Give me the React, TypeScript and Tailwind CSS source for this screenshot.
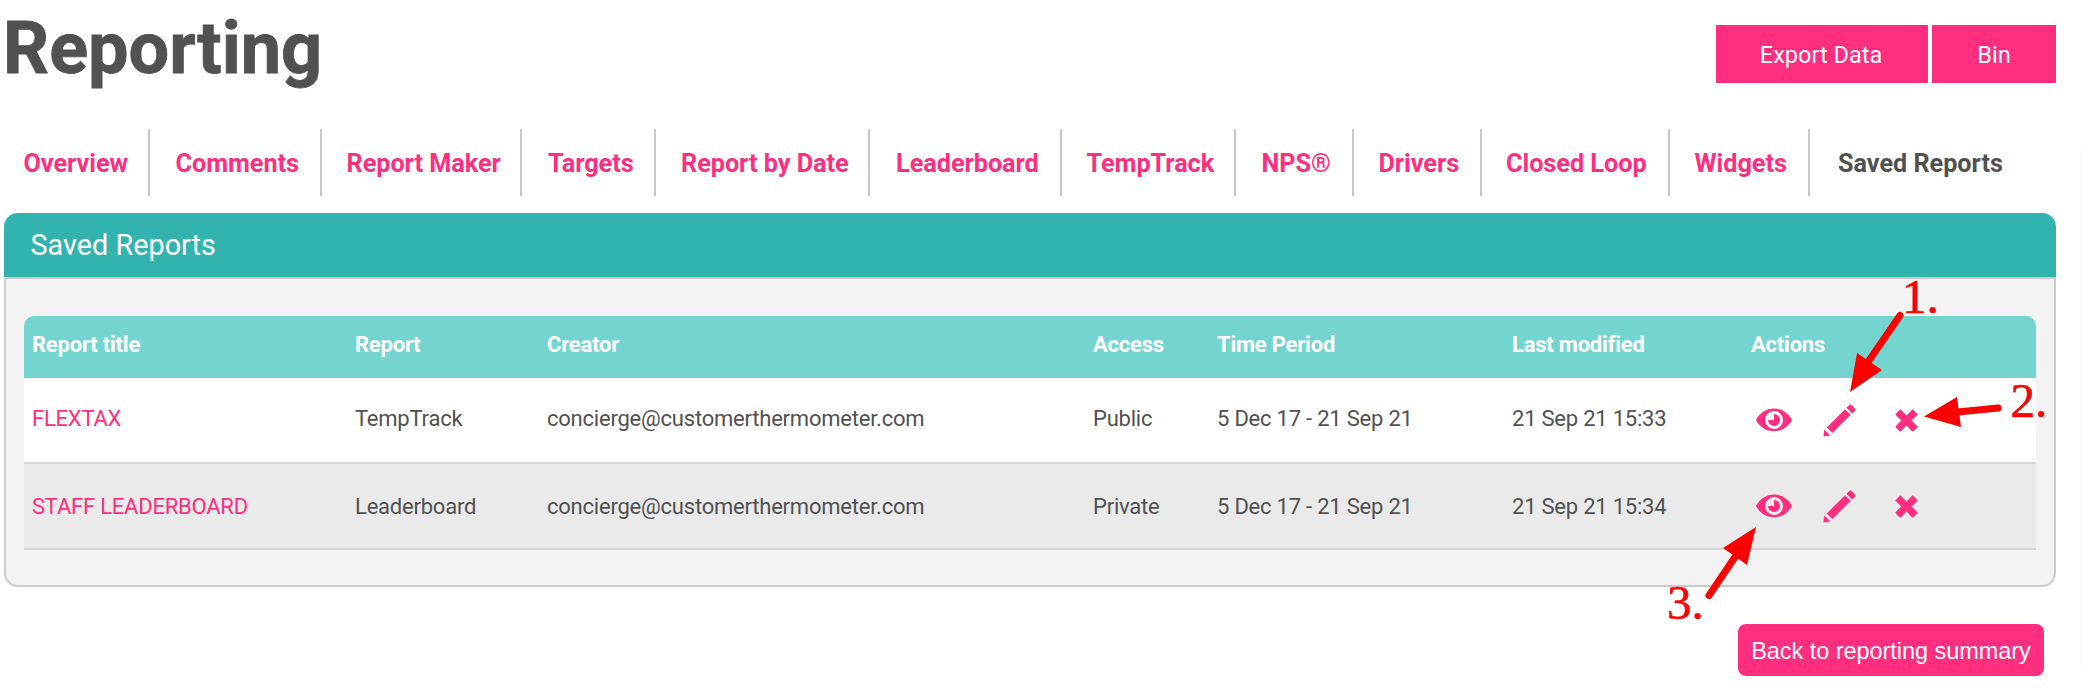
const tabs = [
  { label: "Overview", cls: "w-[146px] pl-[19.500px]" },
  { label: "Comments", cls: "w-[172px] pl-[25.500px]" },
  { label: "Report Maker", cls: "w-[200px] pl-[24.500px]" },
  { label: "Targets", cls: "w-[134px] pl-[26px]" },
  { label: "Report by Date", cls: "w-[214px] pl-[25px]" },
  { label: "Leaderboard", cls: "w-[192px] pl-[26px]" },
  { label: "TempTrack", cls: "w-[174px] pl-[24.500px]" },
  { label: "NPS®", cls: "w-[118px] pl-[25.500px]" },
  { label: "Drivers", cls: "w-[128px] pl-[24.500px]" },
  { label: "Closed Loop", cls: "w-[188px] pl-[24px]" },
  { label: "Widgets", cls: "w-[140px] pl-[24.500px]" },
];

const columns = ["Report title", "Report", "Creator", "Access", "Time Period", "Last modified", "Actions"];

const rows = [
  ["FLEXTAX", "TempTrack", "concierge@customerthermometer.com", "Public", "5 Dec 17 - 21 Sep 21", "21 Sep 21 15:33"],
  ["STAFF LEADERBOARD", "Leaderboard", "concierge@customerthermometer.com", "Private", "5 Dec 17 - 21 Sep 21", "21 Sep 21 15:34"],
];

const grid = "grid grid-cols-[323px_192px_546px_124px_295px_239px_1fr] pl-[8.500px] items-center whitespace-nowrap";

function EyeIcon({ hole }: { hole: string }) {
  return (
    <svg width="36" height="24" viewBox="0 0 36 24" fill="currentColor">
      <path d="M0 12C4 4.500 10.500.6 18 .6S32 4.500 36 12C32 19.500 25.500 23.200 18 23.200S4 19.500 0 12Z" />
      <circle cx="18" cy="12" r="9" fill={hole} />
      <path d="M18 12V6a6 6 0 1 1-6 6Z" />
    </svg>
  );
}

function PencilIcon() {
  return (
    <svg width="33" height="33" viewBox="0 0 33 33" fill="currentColor">
      <path d="M1.200 25.600 7.300 31.600.500 32.500Z" />
      <path d="M3.800 23.400 22 5.200 27.600 10.800 9.400 29Z" />
      <path d="M23.400 3.800 26.600.8Q27.400 0 28.300.8L32.200 4.700Q33 5.600 32.200 6.500L29.100 9.500Z" />
    </svg>
  );
}

function CrossIcon() {
  return (
    <svg width="23" height="23" viewBox="0 0 23 23" fill="currentColor">
      <path d="M.6 5 4.800.7Q5.300.2 5.900.7L11.500 6.500 17 .7Q17.600.2 18.200.7L22.400 5Q22.800 5.500 22.400 6L16.600 11.500 22.400 17.200Q22.800 17.700 22.400 18.200L18.200 22.400Q17.600 22.800 17 22.400L11.500 16.600 5.900 22.400Q5.300 22.800 4.800 22.400L.6 18.200Q.2 17.700.6 17.200L6.300 11.500.6 6Q.2 5.500.6 5Z" />
    </svg>
  );
}

export default function App() {
  return (
    <div className="relative h-[696px] w-[2082px] overflow-hidden bg-white font-[Roboto,sans-serif] text-[#515151]">
      <header className="flex h-[129px] items-start justify-between pr-[26px]">
        <h1 className="pl-[3px] pt-[4px] text-[72px] font-bold leading-[90px] [-webkit-text-stroke:0.8px_#515151]">Reporting</h1>
        <div className="mt-[25px] flex gap-1 text-[23.500px] text-white">
          <button className="h-[58px] w-[212px] bg-[#ff2e7e] pr-[2px] pt-[4px]">Export Data</button>
          <button className="h-[58px] w-[124px] bg-[#ff2e7e] pt-[4px]">Bin</button>
        </div>
      </header>

      <nav className="flex h-[67px] pl-[4px] text-[25.200px] font-bold leading-[69px] text-[#ff2e7e]">
        {tabs.map((t) => (
          <a key={t.label} className={`h-[67px] shrink-0 whitespace-nowrap border-r-2 border-[#c8c8c8] ${t.cls}`}>
            {t.label}
          </a>
        ))}
        <a className="shrink-0 pl-[28px] text-[#515151]">Saved Reports</a>
      </nav>

      <section className="ml-[4px] mt-[17px] w-[2052px]">
        <h2 className="h-[64px] rounded-t-[14px] bg-[#32b3af] pl-[26.500px] text-[28.800px] leading-[65px] text-white">
          Saved Reports
        </h2>
        <div className="h-[310px] rounded-b-[14px] border-2 border-[#cbcbcb] bg-[#f3f3f3] pl-[17.500px] pt-[37px]">
          <div className="w-[2012px] text-[22px] tracking-[-0.22px]">
            <div className={`${grid} h-[62px] rounded-t-[10px] bg-[#74d5d0] pb-[6px] font-bold text-white`}>
              {columns.map((c) => (
                <span key={c}>{c}</span>
              ))}
            </div>
            {rows.map((r, i) => (
              <div key={r[0]} className={`${grid} h-[86px] border-b-2 border-[#d6d6d6] ${i ? "bg-[#eaeaea]" : "bg-white"}`}>
                {r.map((v, j) => (
                  <span key={j} className={`${j ? "" : "text-[#ff2e7e]"} ${i ? "pt-[1px]" : "pb-[3px]"}`}>
                    {v}
                  </span>
                ))}
                <span className="flex items-center pl-[4.500px] text-[#ff2e7e]">
                  <EyeIcon hole={i ? "#eaeaea" : "#fff"} />
                  <span className="ml-[31px]">
                    <PencilIcon />
                  </span>
                  <span className="ml-[39px]">
                    <CrossIcon />
                  </span>
                </span>
              </div>
            ))}
          </div>
        </div>
      </section>

      <footer className="flex justify-end pr-[38px] pt-[37px]">
        <button className="h-[52px] w-[306px] whitespace-nowrap rounded-[8px] bg-[#ff2e7e] pt-[4px] font-['Liberation_Sans',sans-serif] text-[23.400px] text-white">
          Back to reporting summary
        </button>
      </footer>

      <div className="absolute right-0 top-[150px] h-[515px] w-[2px] bg-[#fafafa]" />
      <svg className="pointer-events-none absolute inset-0" width="2082" height="696" fill="#f00" stroke="#f00">
        <g strokeWidth="7" strokeLinecap="round">
          <path d="M1900 315.500 1868 362M1998 408 1958 412M1709 595.500 1735 557" />
        </g>
        <g stroke="none">
          <path d="M1850 392 1857 353 1882 370ZM1924 416.500 1957 397 1961 427ZM1756 527 1723 548 1747 565Z" />
        </g>
        <g strokeWidth="0.6" fontFamily="Liberation Serif, serif" fontSize="49">
          <text x="1902" y="313">1.</text>
          <text x="2010.500" y="417">2.</text>
          <text x="1667" y="619">3.</text>
        </g>
      </svg>
    </div>
  );
}
